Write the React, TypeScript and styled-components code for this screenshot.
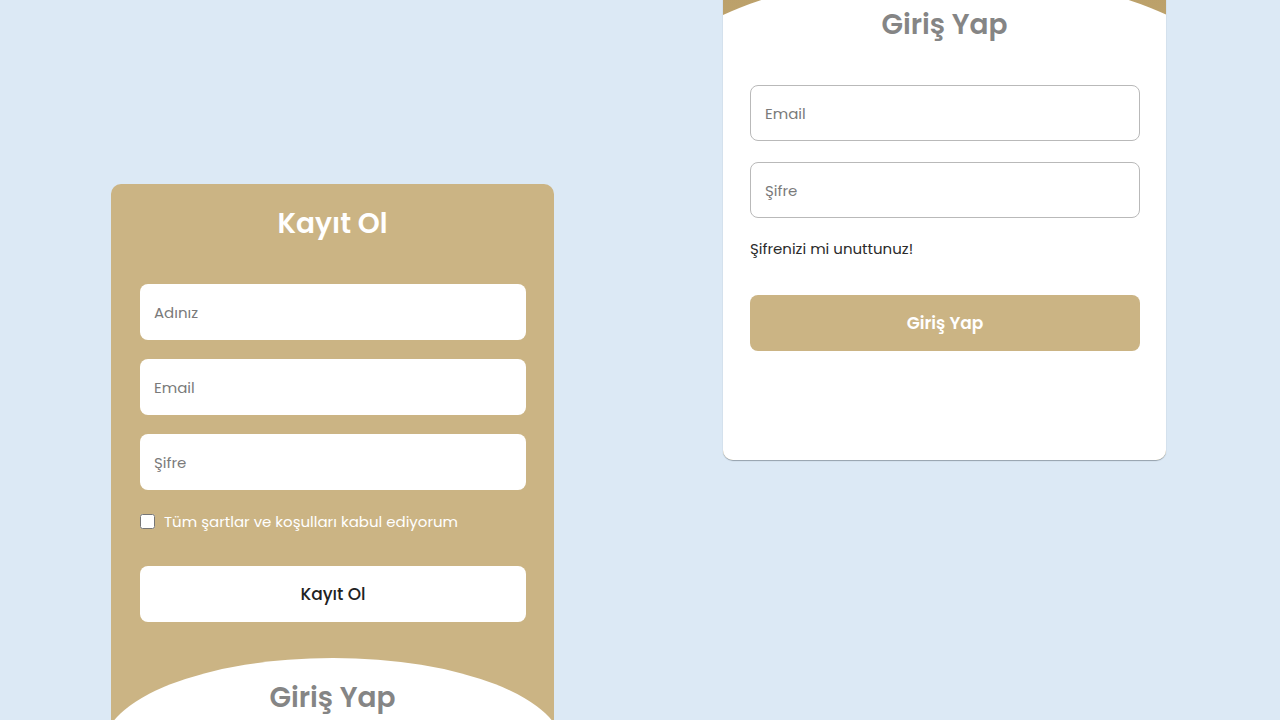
import React from 'react'
import styled, { createGlobalStyle } from 'styled-components'

const tan = '#cbb484'

const GlobalStyle = createGlobalStyle`
  html, body {
    margin: 0;
    padding: 0;
    height: 100%;
    overflow: hidden;
    background: #dce9f5;
    font-family: 'Poppins', 'Inter', 'Noto Sans', sans-serif;
  }
  * { box-sizing: border-box; }
`

const Stage = styled.div`
  display: flex;
  align-items: flex-start;
  gap: 169px;
  padding-left: 111px;
  height: 720px;
  overflow: hidden;
`

const Card = styled.div<{ $offset: number }>`
  width: 443px;
  margin-top: ${({ $offset }) => $offset}px;
  background: ${tan};
  border-radius: 10px;
  overflow: hidden;
  display: flex;
  flex-direction: column;
`

const SignupCard = styled(Card)`
  height: 600px;
  padding-top: 22px;
`

const LoginCard = styled(Card)`
  background: linear-gradient(180deg, #b89c64 0%, ${tan} 60%);
  box-shadow: 0 1px 1px rgba(60, 70, 80, 0.45);
`

const Heading = styled.h2<{ $light?: boolean }>`
  margin: 0;
  text-align: center;
  font-size: 28px;
  line-height: 36px;
  font-weight: 600;
  color: ${({ $light }) => ($light ? '#ffffff' : '#858585')};
`

const Form = styled.div<{ $gap: number; $inset: number }>`
  display: flex;
  flex-direction: column;
  gap: ${({ $gap }) => $gap}px;
  padding: 0 ${({ $inset }) => $inset - 1}px 0 ${({ $inset }) => $inset}px;
`

const Field = styled.input<{ $bordered?: boolean }>`
  height: 56px;
  width: 100%;
  border-radius: 8px;
  border: ${({ $bordered }) => ($bordered ? '1px solid #b9b9b9' : 'none')};
  background: #fff;
  padding: 0 14px;
  font-family: inherit;
  font-size: 15px;
  color: #333;
  outline: none;
  &::placeholder {
    color: #7a7a7a;
  }
`

const CheckRow = styled.label`
  display: flex;
  align-items: center;
  gap: 9px;
  height: 20px;
  margin-top: 2px;
  font-size: 15px;
  color: #fff;
`

const Check = styled.input`
  width: 15px;
  height: 15px;
  margin: 0;
`

const Button = styled.button<{ $primary?: boolean }>`
  height: 56px;
  width: 100%;
  border: none;
  border-radius: 8px;
  background: ${({ $primary }) => ($primary ? tan : '#fff')};
  color: ${({ $primary }) => ($primary ? '#fff' : '#222')};
  font-family: inherit;
  font-size: 17px;
  font-weight: ${({ $primary }) => ($primary ? 600 : 500)};
  cursor: pointer;
`

const Spacer = styled.div<{ $h: number }>`
  height: ${({ $h }) => $h}px;
  flex-shrink: 0;
`

const Arc = styled.div<{ $w: number; $rx: number; $ry: number; $pad: number }>`
  flex: 1;
  width: ${({ $w }) => $w}px;
  margin: 0 ${({ $w }) => (443 - $w) / 2}px;
  background: #fff;
  border-top-left-radius: ${({ $rx, $ry }) => `${$rx}px ${$ry}px`};
  border-top-right-radius: ${({ $rx, $ry }) => `${$rx}px ${$ry}px`};
  padding-top: ${({ $pad }) => $pad}px;
  display: flex;
  flex-direction: column;
`

const Inner = styled.div`
  width: 443px;
  align-self: center;
  display: flex;
  flex-direction: column;
`

const ForgotLink = styled.a`
  display: block;
  font-size: 15px;
  line-height: 22px;
  color: #2b2b2b;
  text-decoration: none;
`

export default function App() {
  return (
    <>
      <GlobalStyle />
      <Stage>
        <SignupCard $offset={184}>
          <Heading $light>Kayıt Ol</Heading>
          <Spacer $h={42} />
          <Form $gap={19} $inset={29}>
            <Field placeholder="Adınız" />
            <Field placeholder="Email" />
            <Field placeholder="Şifre" type="password" />
            <CheckRow>
              <Check type="checkbox" />
              Tüm şartlar ve koşulları kabul ediyorum
            </CheckRow>
            <Spacer $h={16} />
          </Form>
          <Form $gap={0} $inset={29}>
            <Button>Kayıt Ol</Button>
          </Form>
          <Spacer $h={36} />
          <Arc $w={460} $rx={230} $ry={90} $pad={22}>
            <Heading>Giriş Yap</Heading>
          </Arc>
        </SignupCard>

        <LoginCard $offset={-60}>
          <Spacer $h={34} />
          <Arc $w={580} $rx={290} $ry={115} $pad={33}>
            <Inner>
              <Heading>Giriş Yap</Heading>
              <Spacer $h={42} />
              <Form $gap={21} $inset={27}>
                <Field $bordered placeholder="Email" />
                <Field $bordered placeholder="Şifre" type="password" />
              </Form>
              <Spacer $h={20} />
              <Form $gap={0} $inset={27}>
                <ForgotLink href="#">Şifrenizi mi unuttunuz!</ForgotLink>
              </Form>
              <Spacer $h={35} />
              <Form $gap={0} $inset={27}>
                <Button $primary>Giriş Yap</Button>
              </Form>
              <Spacer $h={109} />
            </Inner>
          </Arc>
        </LoginCard>
      </Stage>
    </>
  )
}
